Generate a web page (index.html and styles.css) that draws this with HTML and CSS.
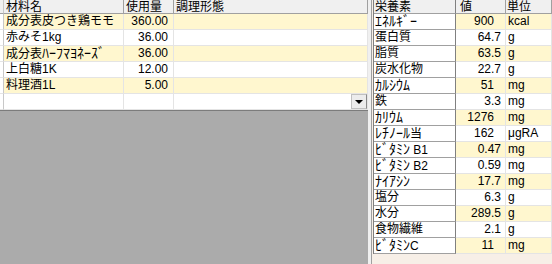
FILE: index.html
```html
<!DOCTYPE html>
<html lang="ja">
    <head>
        <title>材料</title>
        <meta charset="UTF-8">
        <meta name="viewport" content="width=device-width, initial-scale=1">
        <link rel="stylesheet" href="styles.css">
    </head>
    <body>
        <div id="main">
            <div id="items">
                <div class="grid itemGrid">
                    <div class="hd sel"></div>
                    <div class="hd">材料名</div>
                    <div class="hd">使用量</div>
                    <div class="hd">調理形態</div>

                    <div class="sel"></div>
                    <div class="cell y">成分表皮つき鶏モモ</div>
                    <div class="cell y num">360.00</div>
                    <div class="cell y"></div>

                    <div class="sel"></div>
                    <div class="cell">赤みそ1kg</div>
                    <div class="cell num">36.00</div>
                    <div class="cell"></div>

                    <div class="sel"></div>
                    <div class="cell y">成分表<span class="kana">ﾊｰﾌﾏﾖﾈｰｽﾞ</span></div>
                    <div class="cell y num">36.00</div>
                    <div class="cell y"></div>

                    <div class="sel"></div>
                    <div class="cell">上白糖1K</div>
                    <div class="cell num">12.00</div>
                    <div class="cell"></div>

                    <div class="sel"></div>
                    <div class="cell y">料理酒1L</div>
                    <div class="cell y num">5.00</div>
                    <div class="cell y"></div>

                    <div class="sel"></div>
                    <div class="cell"></div>
                    <div class="cell"></div>
                    <div class="cell drop"><span class="btn"><i></i></span></div>
                </div>
                <div class="blank"></div>
            </div>

            <div id="nutri">
                <div class="grid nutriGrid">
                    <div class="hd">栄養素</div>
                    <div class="hd val">値</div>
                    <div class="hd">単位</div>

                    <div class="name"><span class="kana">ｴﾈﾙｷﾞｰ</span></div><div class="cell y num int">900</div><div class="cell y unit">kcal</div>
                    <div class="name">蛋白質</div><div class="cell num">64.7</div><div class="cell unit">g</div>
                    <div class="name">脂質</div><div class="cell y num">63.5</div><div class="cell y unit">g</div>
                    <div class="name">炭水化物</div><div class="cell num">22.7</div><div class="cell unit">g</div>
                    <div class="name"><span class="kana">ｶﾙｼｳﾑ</span></div><div class="cell y num int">51</div><div class="cell y unit">mg</div>
                    <div class="name">鉄</div><div class="cell num">3.3</div><div class="cell unit">mg</div>
                    <div class="name"><span class="kana">ｶﾘｳﾑ</span></div><div class="cell y num int">1276</div><div class="cell y unit">mg</div>
                    <div class="name"><span class="kana">ﾚﾁﾉｰﾙ</span>当</div><div class="cell num int">162</div><div class="cell unit">μgRA</div>
                    <div class="name"><span class="kana">ﾋﾞﾀﾐﾝ</span> B1</div><div class="cell y num">0.47</div><div class="cell y unit">mg</div>
                    <div class="name"><span class="kana">ﾋﾞﾀﾐﾝ</span> B2</div><div class="cell num">0.59</div><div class="cell unit">mg</div>
                    <div class="name"><span class="kana">ﾅｲｱｼﾝ</span></div><div class="cell y num">17.7</div><div class="cell y unit">mg</div>
                    <div class="name">塩分</div><div class="cell num">6.3</div><div class="cell unit">g</div>
                    <div class="name">水分</div><div class="cell y num">289.5</div><div class="cell y unit">g</div>
                    <div class="name">食物繊維</div><div class="cell num">2.1</div><div class="cell unit">g</div>
                    <div class="name"><span class="kana">ﾋﾞﾀﾐﾝ</span>C</div><div class="cell y num int">11</div><div class="cell y unit">mg</div>
                </div>
            </div>
        </div>
    </body>
</html>
```

FILE: styles.css
```css
html,body{margin: 0;padding: 0}
body{width: 552px;height: 264px;overflow: hidden;background: #f0f0f0;
font: 12px/15px "Liberation Sans", "Noto Sans CJK JP", sans-serif;color: #000}

#main{display: flex;height: 264px}

.grid{display: grid;grid-auto-rows: 16px}
.grid > div{box-sizing: border-box;white-space: nowrap;overflow: hidden;border-right: 1px solid #e4e4e4;border-bottom: 1px solid #e4e4e4;background: #fff}
.grid .hd{background: #f0f0f0;border-right-color: #a0a0a0;border-bottom-color: #a0a0a0;padding-left: 2px}
.grid .y{background: #fff7cf}
.grid .num{text-align: right;padding-right: 4px}
.kana{font-size: 14px;line-height: 15px}

/* 材料 */
#items{width: 368px;display: flex;flex-direction: column}
.itemGrid{grid-template-columns: 4px 120px 50px 194px;grid-template-rows: 14px}
.itemGrid .cell{padding-left: 2px}
.itemGrid .num{padding-right: 5px}
.itemGrid .sel{background: #fff;border-right-color: #c8c8c8;padding: 0}
.itemGrid .hd.sel{background: #f0f0f0}
.itemGrid .drop{display: flex;justify-content: flex-end;padding: 0}
.btn{width: 16px;height: 15px;box-sizing: border-box;background: #ececec;border: 1px solid #c0c0c0;border-right-color: #8a8a8a;
display: flex;align-items: center;justify-content: center}
.btn i{width: 0;height: 0;border-top: 4px solid #000;border-left: 4px solid transparent;border-right: 4px solid transparent}
.blank{flex: 1;background: #ababab;border-top: 1px solid #7c7c7c}

/* 栄養素 */
#nutri{flex: 1;margin-left: 3px;border-left: 1px solid #a0a0a0;padding-left: 1px;background: #f7efe7}
.nutriGrid{grid-template-columns: 82px 50px 46px;grid-template-rows: 14px;border-left: 1px solid #808080}
.nutriGrid .hd{padding-left: 1px}
.nutriGrid .hd.val{padding-left: 4px}
.nutriGrid .name{padding-left: 1px;border-right-color: #808080;border-bottom-color: #a0a0a0}
.nutriGrid .hd:first-child{border-right-color: #808080}
.nutriGrid .int{padding-right: 11px}
.nutriGrid .unit{padding-left: 2px}
```
